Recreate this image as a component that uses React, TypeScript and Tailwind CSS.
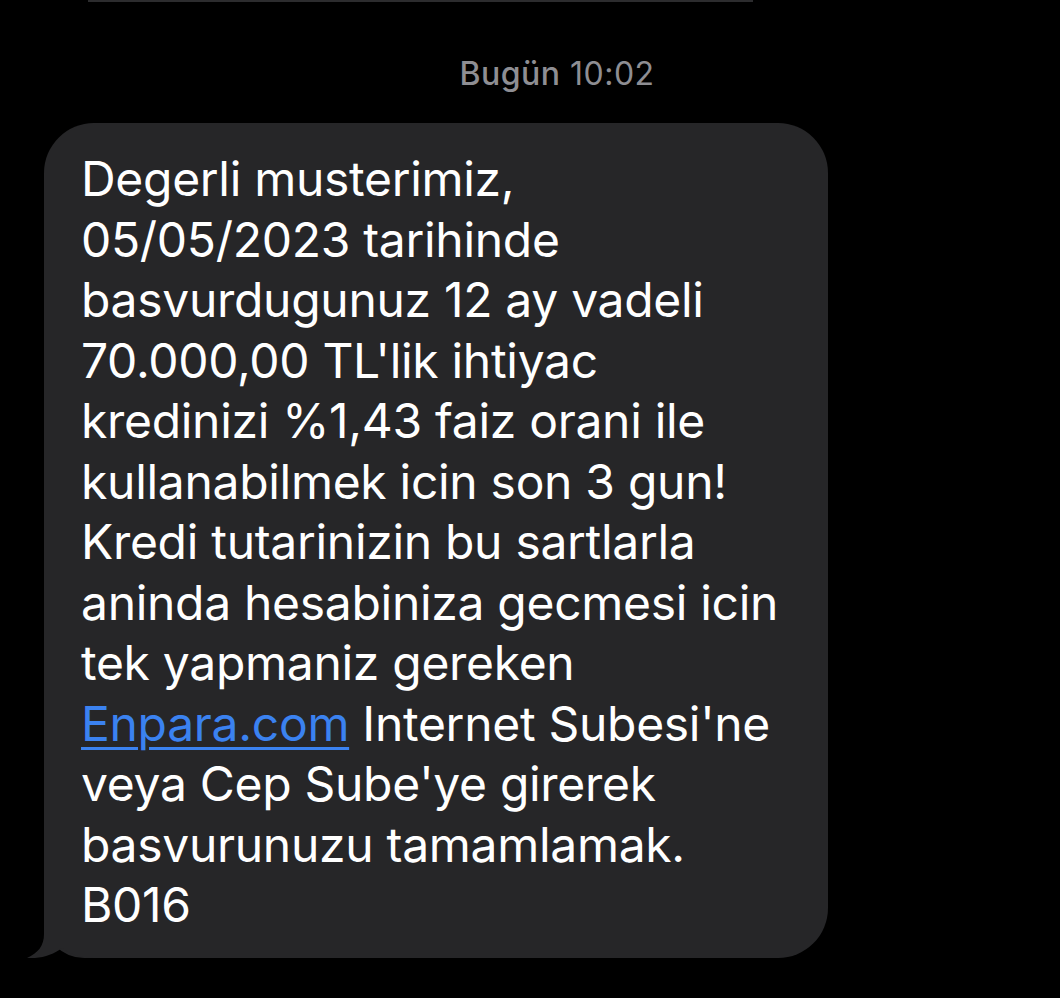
const lines: React.ReactNode[] = [
  "Degerli musterimiz,",
  "05/05/2023 tarihinde",
  "basvurdugunuz 12 ay vadeli",
  "70.000,00 TL'lik ihtiyac",
  "kredinizi %1,43 faiz orani ile",
  "kullanabilmek icin son 3 gun!",
  "Kredi tutarinizin bu sartlarla",
  "aninda hesabiniza gecmesi icin",
  "tek yapmaniz gereken",
  <>
    <span className="text-[#3b82f0] underline decoration-[3px] underline-offset-[6px]">
      Enpara.com
    </span>{" "}
    Internet Subesi'ne
  </>,
  "veya Cep Sube'ye girerek",
  "basvurunuzu tamamlamak.",
  "B016",
];

function Tail() {
  return (
    <svg
      className="absolute left-[-17px] bottom-0"
      width="70"
      height="60"
      viewBox="0 0 70 60"
    >
      <path
        d="M17 0 L17 36 C17 48 11 55 0 60 C13 61 26 57 35 50 C44 57 56 60 68 60 L70 60 L70 0 Z"
        fill="#262628"
      />
    </svg>
  );
}

export default function App() {
  return (
    <div
      className="w-[1060px] h-[998px] bg-black overflow-hidden"
      style={{ fontFamily: "Inter, 'Noto Sans', sans-serif" }}
    >
      <div className="flex h-[2px]">
        <div className="ml-[88px] w-[665px] h-[2px] bg-[#2c2c2e]" />
      </div>
      <div className="flex justify-center pl-[54px] pt-[53px] h-[121px]">
        <div className="text-[32px] leading-[38px] text-[#8e8e93] tracking-[0.5px]">
          <span className="font-medium">Bugün</span> 10:02
        </div>
      </div>
      <div className="relative ml-[44px] w-[784px] h-[835px] bg-[#262628] rounded-[50px] rounded-bl-[40px] pl-[37px] pt-[26px]">
        <Tail />
        <div className="relative text-white text-[48px] leading-[60.5px] tracking-[-0.3px] whitespace-nowrap">
          {lines.map((l, i) => (
            <div key={i}>{l}</div>
          ))}
        </div>
      </div>
    </div>
  );
}
